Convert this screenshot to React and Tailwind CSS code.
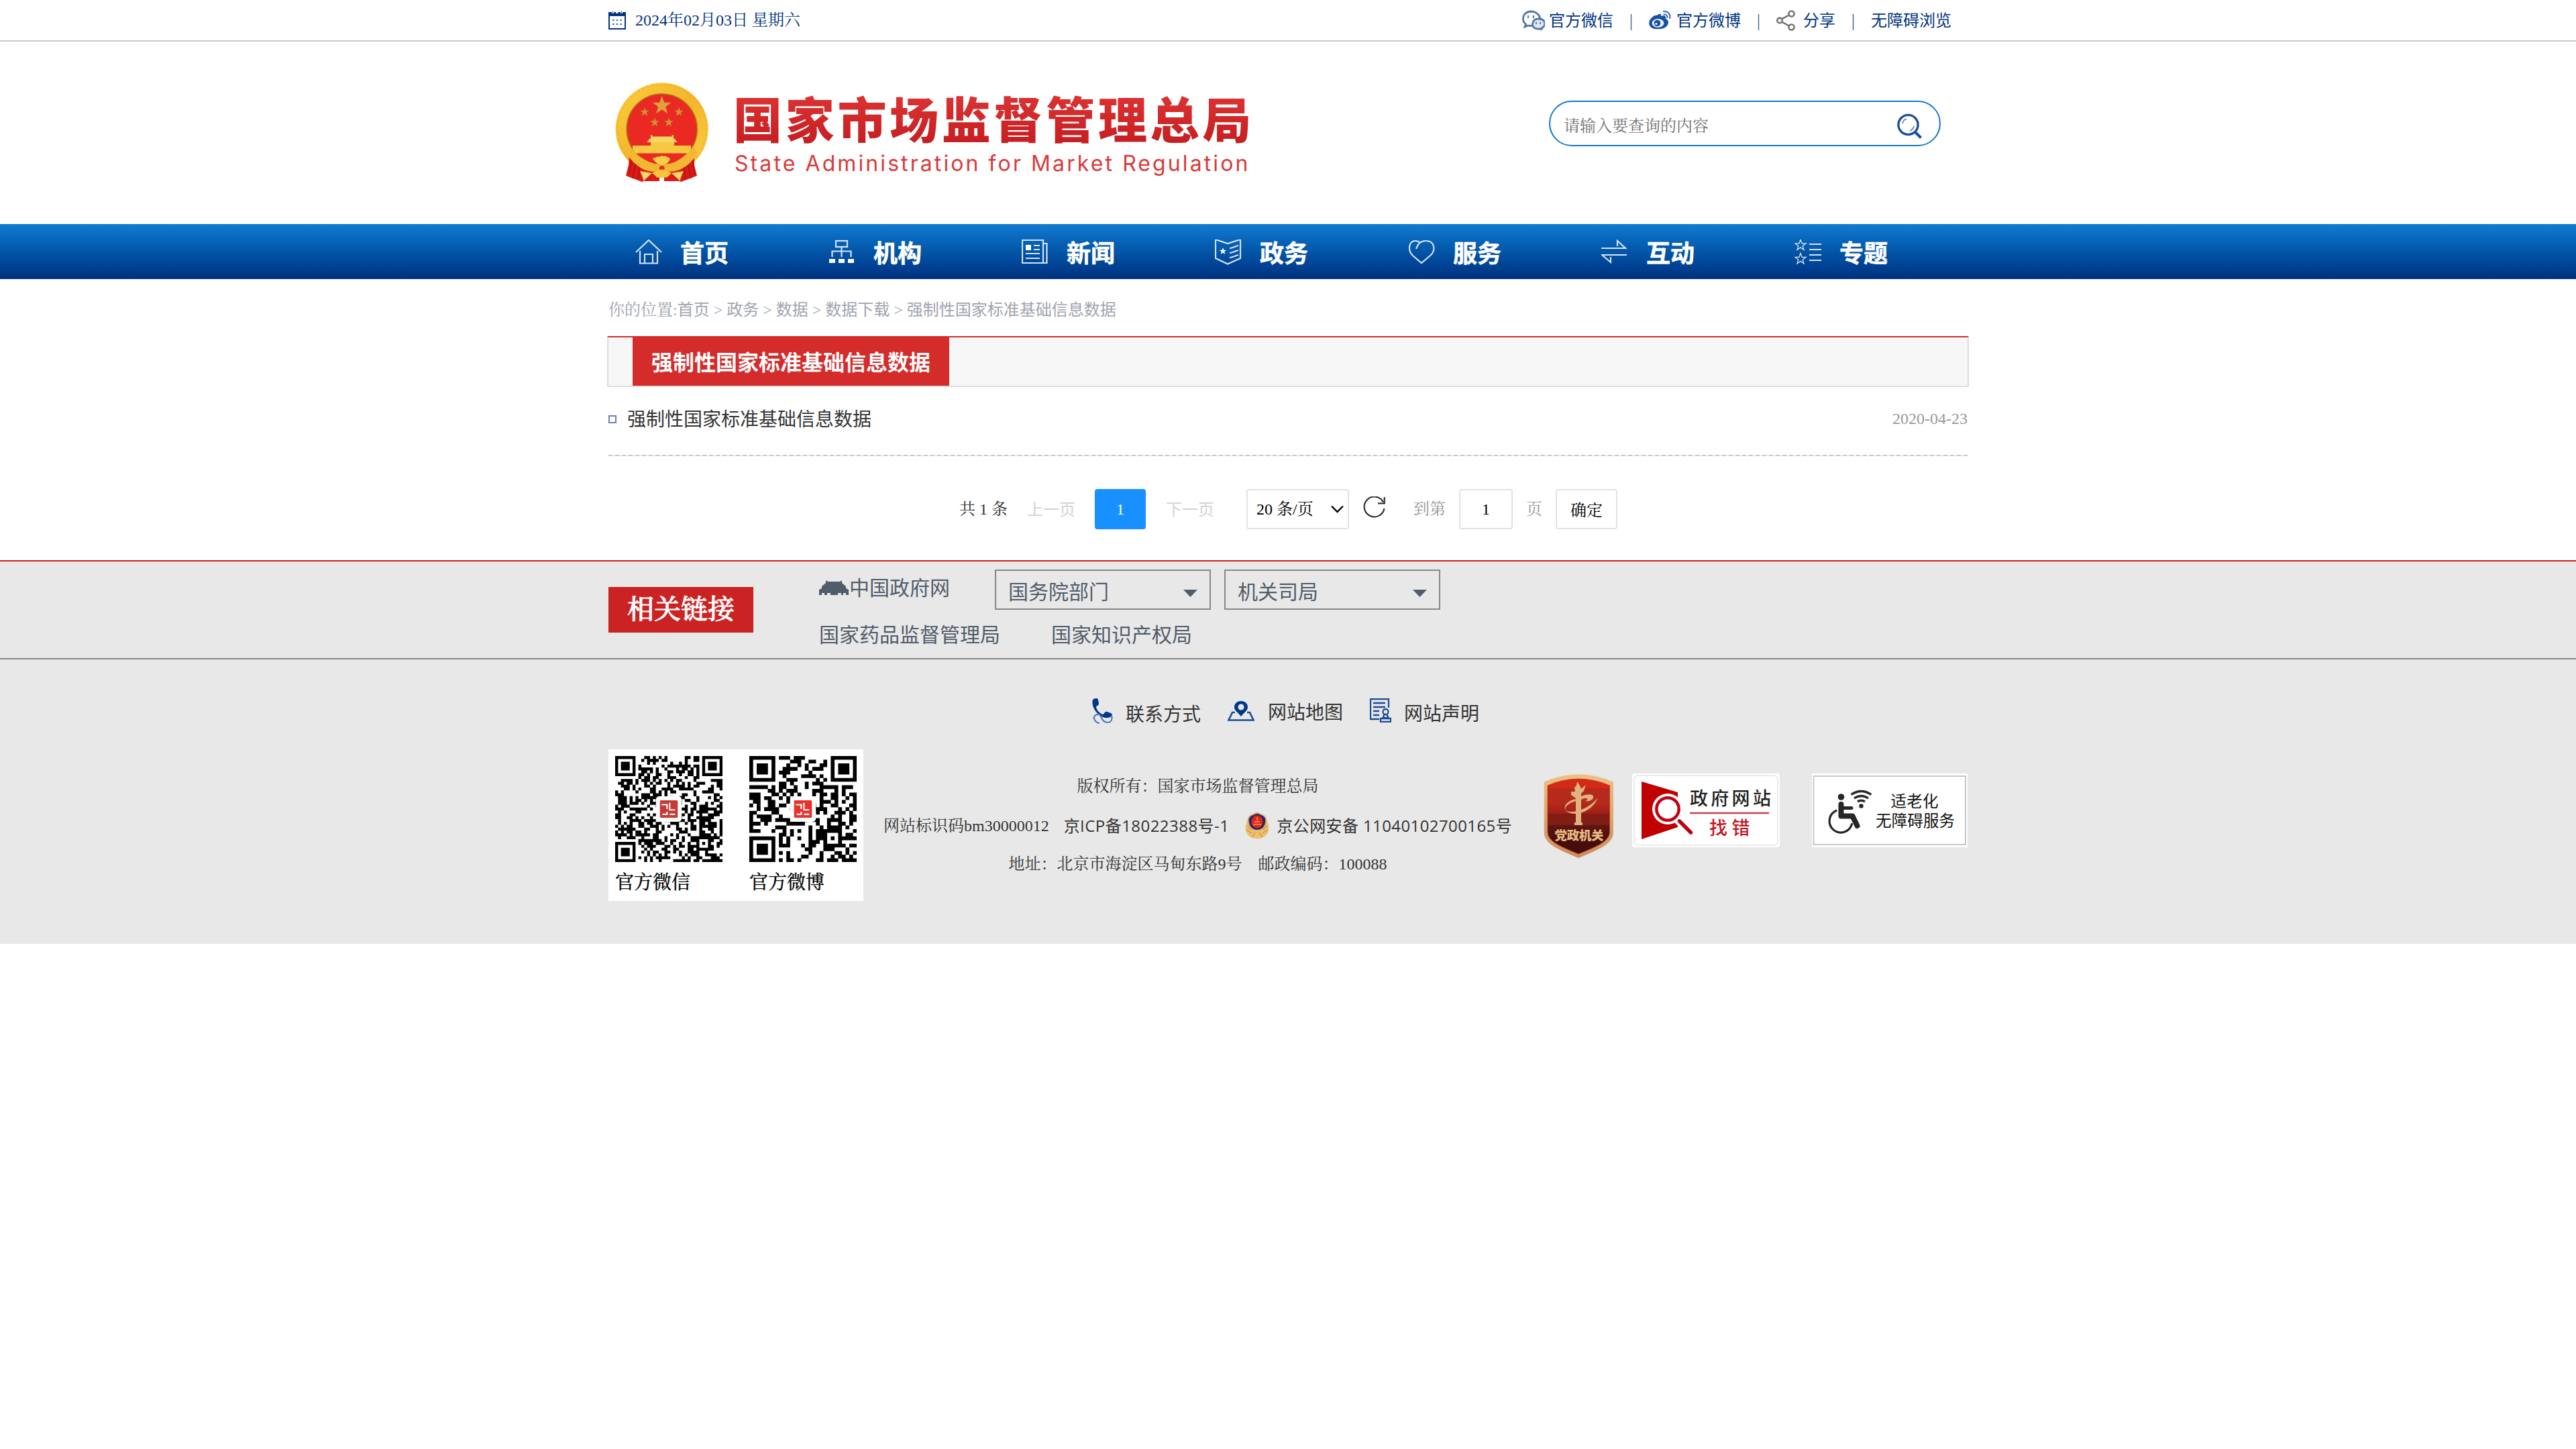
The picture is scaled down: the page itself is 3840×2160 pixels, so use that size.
import React from "react";

const SERIF = "font-['Liberation_Serif','Noto_Serif_CJK_SC','Noto_Sans_CJK_SC',serif]";
const SANS = "font-['Open_Sans','Noto_Sans_CJK_SC',sans-serif]";

function star(cx, cy, r) {
  const pts = [];
  for (let i = 0; i < 10; i++) {
    const a = -Math.PI / 2 + (i * Math.PI) / 5;
    const d = i % 2 ? r * 0.4 : r;
    pts.push(`${(cx + d * Math.cos(a)).toFixed(2)},${(cy + d * Math.sin(a)).toFixed(2)}`);
  }
  return pts.join(" ");
}

function Emblem() {
  return (
    <svg className="h-[170px] w-[170px] shrink-0" viewBox="0 0 170 170">
      <defs>
        <linearGradient id="gold" x1="0" y1="0" x2="1" y2="1">
          <stop offset="0" stopColor="#fbcf3d" />
          <stop offset="0.5" stopColor="#f3b52b" />
          <stop offset="1" stopColor="#fbd045" />
        </linearGradient>
      </defs>
      <circle cx="81.7" cy="82.5" r="69" fill="url(#gold)" />
      <circle cx="81.7" cy="82.5" r="66" fill="none" stroke="#e5a326" strokeWidth="1.5" strokeDasharray="3 4" opacity="0.6" />
      <circle cx="81.7" cy="82.5" r="52.5" fill="#ea2a22" stroke="#a8741a" strokeWidth="1.5" />
      <polygon points={star(81.7, 47.5, 14.5)} fill="#e0a03a" />
      <polygon points={star(56, 57, 7)} fill="#d09038" />
      <polygon points={star(107, 57, 7)} fill="#d09038" />
      <polygon points={star(71, 72.5, 7)} fill="#d09038" />
      <polygon points={star(92, 72.5, 7)} fill="#d09038" />
      <path d="M65 91.5h2.5v2h29v-2H99v5h1.5l4 5.500h-45l4-5.500h1.500z" fill="#fbd564" />
      <path d="M65 102h35v5h25v5l-3 6.500H42l-4-6.500v-5h27z" fill="#f9c842" />
      <path d="M33 119l9 3c8 14 22 20 36 22v16H55l-3 1-24-9 4-16z" fill="#d91a16" />
      <path d="M130 119l-9 3c-8 14-22 20-36 22v16h22l3 1 24-9-4-16z" fill="#d91a16" />
      <path d="M37 126l-4 24M43 132l-5 24M49 138l-3 20M126 126l4 24M120 132l5 24M114 138l3 20" stroke="#b01010" strokeWidth="1.5" />
      <path d="M49 145c3 7 5 10 5 15l13-12M114 145c-3 7-5 10-5 15l-13-12z" fill="#f8d668" />
      <path d="M29 119c12 18 30 30 45 26l8-8 8 8c15 4 33-8 45-26l-6-12c-10 16-25 24-38 24H71c-13 0-28-8-38-24z" fill="#f3b831" />
      <path d="M45 119h73c-9 9-19 16-36 16s-28-7-37-16z" fill="#ea2a22" />
      <path d="M68 127q2-3 5-2 2-3 5-1 3-3 6-1 3-1 5 1 4 0 5 4l-5 6-7 3-7-3z" fill="#f9cd4c" stroke="#d99a22" strokeWidth="0.7" />
      <circle cx="81.700" cy="141" r="4" fill="#ea2a22" />
      <path d="M67 148q15-11 29 0l-5 5q-3 3-6 1-4 3-7 0-4 2-6-2z" fill="#f6c53c" />
    </svg>
  );
}

function CalendarIcon() {
  return (
    <svg className="h-[28px] w-[26px]" viewBox="0 0 26 28">
      <rect x="1" y="3" width="24" height="24" fill="#fff" stroke="#00347f" strokeWidth="2" />
      <rect x="0" y="2" width="26" height="6" fill="#00347f" />
      <path d="M6.500 0v4M12.800 0v4M19.500 0v4" stroke="#fff" strokeWidth="3" />
      <path d="M6.500 0v4M19.500 0v4" stroke="#5b79ad" strokeWidth="1" />
      <path d="M6 14h14M6 20h14" stroke="#3f65a3" strokeWidth="2" strokeDasharray="2.500 3.200" />
    </svg>
  );
}

function WechatIcon() {
  return (
    <svg className="h-[30px] w-[34px]" viewBox="0 0 34 30" fill="none" stroke="#5577a6" strokeWidth="2.800">
      <path d="M16 23c-2 .6-5 .6-7 0l-5 2 1.500-4C-1 16 0 3 13 2c8 0 13 5 14 11" />
      <path d="M24 13c12 0 12 11 5 14v2l-3-1c-8 1-12-4-10-9 1-4 4-6 8-6z" fill="#dfe7f1" />
      <path d="M9 8v4M17 8v4M21 18v3M27 18v3" strokeWidth="2" />
    </svg>
  );
}

function WeiboIcon() {
  return (
    <svg className="h-[28px] w-[33px]" viewBox="0 0 33 28">
      <path d="M12 7c3-3 7-3 6 1 5-2 8 0 7 4 4 2 5 5 3 9-3 6-12 7-19 6C1 26-2 19 2 13c3-4 7-7 10-6z" fill="#1650a0" />
      <ellipse cx="13.500" cy="18.500" rx="9" ry="6.500" fill="#e6edf6" />
      <circle cx="12.500" cy="18.500" r="4.800" fill="#1650a0" />
      <circle cx="11" cy="19.500" r="1.600" fill="#fff" />
      <path d="M21 1c7-1 12 4 10 11M21.500 5.500c4-.6 6.500 2 5.700 5.500" fill="none" stroke="#4a76b3" strokeWidth="2.200" />
    </svg>
  );
}

function ShareIcon() {
  return (
    <svg className="h-[31px] w-[28px]" viewBox="0 0 28 31" fill="none" stroke="#6b6b6b" strokeWidth="2.400">
      <circle cx="5" cy="15.500" r="3.800" />
      <circle cx="22.500" cy="5.500" r="4.100" />
      <circle cx="22.500" cy="25.500" r="4.100" />
      <path d="M8.500 13l10.500-5.500M8.500 18l10.500 5.500" />
    </svg>
  );
}

function SearchIcon() {
  return (
    <svg className="h-[38px] w-[37px]" viewBox="0 0 37 38" fill="none" stroke="#1d4f9c" strokeWidth="3.400">
      <circle cx="16.500" cy="17" r="14.600" />
      <path d="M27.500 28.500l8 8" strokeWidth="4" />
      <path d="M8 15c1-4 3-6 6-7M25 19c-1 4-3 6-6 7" strokeWidth="1.800" stroke="#5f86bd" />
    </svg>
  );
}

const NAV_ICONS = {
  home: (
    <path d="M1 19L20 1l19 18M7 17v18.500h26V17M14 35V22h12v13" />
  ),
  org: (
    <>
      <rect x="11" y="2" width="17" height="9" />
      <path d="M19.500 11v15M5.500 26v-8.500h28V26" />
      <path d="M1 29h9v6H1zM15 29h9v6h-9zM29 29h9v6h-9z" fill="#fff" stroke="none" />
    </>
  ),
  news: (
    <>
      <path d="M1 1h31v34H1zM32 6h5.500v29H32" />
      <path d="M6 8h8v8H6z" fill="#fff" stroke="none" />
      <path d="M18 9h9M18 15h9M6 21h21M6 28h21" />
    </>
  ),
  gov: (
    <>
      <path d="M1 0l18 6 19-6v28L19 36.500 1 28z" />
      <polygon points={star(12, 17.500, 5.500)} fill="#fff" stroke="none" />
      <path d="M22 13c5 0 8-3 13-4M22 20c5 0 8-3 13-4M22 27c5 0 8-3 13-4" />
    </>
  ),
  heart: <path d="M12 14C14 8 18 2 26 2c15 0 15 15 7 22L20 35 7 24C-1 16 1 2 11 2c3 0 5 1 7 3" />,
  swap: <path d="M0 13h36L24 2v8M38 23H1l13 11v-8" />,
  topic: (
    <>
      <polygon points={star(9, 8.500, 8.500)} strokeWidth="1.300" />
      <polygon points={star(9, 29, 8.500)} strokeWidth="1.300" />
      <path d="M22 7h18M22 15h18M22 23h18M22 31h18" />
    </>
  ),
};

const NAV = [
  ["home", "首页"],
  ["org", "机构"],
  ["news", "新闻"],
  ["gov", "政务"],
  ["heart", "服务"],
  ["swap", "互动"],
  ["topic", "专题"],
];

function qrPath(n, seed) {
  let s = seed;
  const rnd = () => {
    s = (s * 1103515245 + 12345) % 2147483648;
    return s / 2147483648;
  };
  const finder = (x, y) => {
    const spots = [[0, 0], [n - 7, 0], [0, n - 7]];
    for (const [fx, fy] of spots) {
      const dx = x - fx;
      const dy = y - fy;
      if (dx >= -1 && dx <= 7 && dy >= -1 && dy <= 7) {
        const m = Math.max(Math.abs(dx - 3), Math.abs(dy - 3));
        return m === 3 || m <= 1 ? 1 : 0;
      }
    }
    const a = Math.max(Math.abs(x - (n - 7)), Math.abs(y - (n - 7)));
    if (a <= 2) return a === 1 ? 0 : 1;
    return -1;
  };
  let d = "";
  for (let y = 0; y < n; y++) {
    for (let x = 0; x < n; x++) {
      const r = rnd();
      const f = finder(x, y);
      if (f === 1 || (f === -1 && r > 0.49)) d += `M${x} ${y}h1.03v1.03h-1.03z`;
    }
  }
  return d;
}

function QrCode({ n, seed, tone }) {
  const c = n / 2;
  const w = n * 0.12;
  const r = n * 0.083;
  return (
    <svg className="h-[158px] w-[160px]" viewBox={`0 0 ${n} ${n}`} preserveAspectRatio="none">
      <path d={qrPath(n, seed)} fill="#000" />
      <rect x={c - w} y={c - w} width={w * 2} height={w * 2} rx={n * 0.03} fill="#fff" />
      <rect x={c - r} y={c - r} width={r * 2} height={r * 2} rx={n * 0.01} fill={tone} />
      <path
        d={`M${c - r * 0.8} ${c - r * 0.5}h${r * 0.6}v${r * 0.5}M${c + r * 0.1} ${c - r * 0.7}v${r * 0.8}h${r * 0.6}M${c - r * 0.7} ${c + r * 0.6}h${r * 0.5}v${-r * 0.3}M${c + r * 0.1} ${c + r * 0.6}h${r * 0.6}`}
        stroke="#fff"
        strokeWidth={n * 0.013}
        fill="none"
      />
    </svg>
  );
}

function PartyShield() {
  return (
    <svg className="h-[127px] w-[105px] shrink-0" viewBox="0 0 105 127">
      <defs>
        <linearGradient id="rim" x1="0" y1="0" x2="0" y2="1">
          <stop offset="0" stopColor="#ecc184" />
          <stop offset="1" stopColor="#c98f5c" />
        </linearGradient>
        <linearGradient id="field" x1="0" y1="0" x2="0" y2="1">
          <stop offset="0" stopColor="#d22a17" />
          <stop offset="0.12" stopColor="#d22a17" />
          <stop offset="0.13" stopColor="#b52a1c" />
          <stop offset="0.32" stopColor="#b52a1c" />
          <stop offset="0.46" stopColor="#a01f17" />
          <stop offset="0.47" stopColor="#811d14" />
          <stop offset="0.61" stopColor="#811d14" />
          <stop offset="0.62" stopColor="#5f1712" />
          <stop offset="0.84" stopColor="#450d0b" />
          <stop offset="1" stopColor="#450d0b" />
        </linearGradient>
      </defs>
      <path d="M.7 12.500Q52-10 104 12.500V88c0 18-26 27-52 38C26 115 .7 106 .7 88z" fill="url(#rim)" />
      <path d="M6 18Q52-2 98.500 18V87c0 15-22 23-46.500 33C28 110 6 102 6 87z" fill="url(#field)" stroke="#c9301c" strokeWidth="0.8" />
      <path d="M46 77v-4h2V37l-7-5v-5h6l-1-6 3-3 1-6 4 6 2 5 7-6-3 9-4 4v43h2v4z" fill="#e0b27e" />
      <path d="M54 35c12-6 22-4 20 1-1 4-7 6-12 5 4-1 5-4 0-4-3 0-6 2-8 3z" fill="#e0b27e" />
      <path d="M48 41c-14 4-19 12-13 15 9 4 33-3 46-20-8 20-31 28-44 22-11-5-4-17 11-20z" fill="#e0b27e" />
      <text x="53" y="98.500" textAnchor="middle" fontSize="18.500" fontWeight="900" fill="#e6b982" textLength="73" fontFamily="'Noto Sans CJK SC', sans-serif">党政机关</text>
    </svg>
  );
}

function ErrorReportCard() {
  return (
    <svg className="h-[110px] w-[220px] shrink-0" viewBox="0 0 220 110">
      <rect width="220" height="110" rx="4" fill="#fff" />
      <rect x="3" y="3" width="214" height="104" rx="6" fill="none" stroke="#ececec" strokeWidth="2" />
      <path d="M14 12l54 16v52L14 98z" fill="#c00000" />
      <circle cx="53" cy="53" r="23" fill="#fff" />
      <path d="M66 68l10 10" stroke="#fff" strokeWidth="11" />
      <circle cx="53" cy="53" r="16.700" fill="#fff" stroke="#c00010" strokeWidth="4.500" />
      <path d="M70.500 71L87.500 88" stroke="#c00010" strokeWidth="5.500" strokeLinecap="round" />
      <text x="86" y="47" fontSize="27" letterSpacing="4.300" fontWeight="500" fill="#222" fontFamily="'Noto Sans CJK SC', sans-serif">政府网站</text>
      <path d="M86 59h118" stroke="#d0404a" strokeWidth="2.300" />
      <text x="115" y="91" fontSize="27" letterSpacing="6.500" fontWeight="500" fill="#c8141e" fontFamily="'Noto Sans CJK SC', sans-serif">找错</text>
    </svg>
  );
}

function AccessibleCard() {
  return (
    <svg className="h-[110px] w-[232px] shrink-0" viewBox="0 0 232 110">
      <rect width="232" height="110" fill="#fff" />
      <rect x="2.500" y="4" width="226.500" height="102" fill="none" stroke="#c8c8c8" strokeWidth="2" />
      <g fill="none" stroke="#262626">
        <circle cx="43.500" cy="35" r="4.800" fill="#262626" stroke="none" />
        <path d="M43.500 46v17.500h17L67.500 78" strokeWidth="8" strokeLinecap="round" strokeLinejoin="round" />
        <path d="M44 51.500h15" strokeWidth="5" strokeLinecap="round" />
        <path d="M36 55.500a17 17 0 1 0 23.500 20" strokeWidth="3.200" strokeLinecap="round" />
        <circle cx="73.500" cy="48.500" r="3.200" fill="#262626" stroke="none" />
        <path d="M58.500 31.500q15-10 30 0M63 37q10.500-7 21 0M68 42q5.500-3.500 11 0" strokeWidth="3.300" />
      </g>
      <text x="117.500" y="49.500" fontSize="23.500" fill="#111" textLength="71" fontFamily="'Noto Sans CJK SC', sans-serif">适老化</text>
      <text x="95" y="79" fontSize="23.500" fill="#111" textLength="118" fontFamily="'Noto Sans CJK SC', sans-serif">无障碍服务</text>
    </svg>
  );
}

function PoliceBadge() {
  return (
    <svg className="h-[40px] w-[36px] shrink-0" viewBox="0 0 36 40">
      <path d="M6 10C-3 18 0 34 9 37c5 3 13 3 18 0 9-3 12-19 3-27z" fill="#ecc070" />
      <path d="M3 20l6 6M2 26l8 5M33 20l-6 6M34 26l-8 5M10 37l5-7M26 37l-5-7" stroke="#d99c48" strokeWidth="1.500" />
      <path d="M18 0c3 0 4 2 8 3 6 2 7 8 6 12-1 8-6 12-14 12S5 23 4 15C3 11 4 5 10 3c4-1 5-3 8-3z" fill="#e2a95a" />
      <path d="M18 2c3 0 5 2 8 3 4 2 5 6 4 10-1 7-6 11-12 11S7 22 6 15C5 11 6 7 10 5c3-1 5-3 8-3z" fill="#28286e" />
      <ellipse cx="18" cy="14" rx="8.500" ry="9.500" fill="#e0261f" />
      <path d="M12 18h12M14 14h8M18 7v5" stroke="#f0a030" strokeWidth="1.500" />
    </svg>
  );
}

function PhoneIcon() {
  return (
    <svg className="h-[38px] w-[31px]" viewBox="0 0 31 38">
      <path d="M1 2c2-2 7-3 8 0l1 6c0 3-4 3-4 5 1 5 5 9 10 11 2 0 3-5 6-4l6 2c3 2 2 5-1 6-13 6-30-13-26-26z" fill="#00388a" />
      <path d="M2 30c3-8 9-8 12-1 3 8 13 9 15 3 1-3 1-5-1-6M3 29c0 5 5 8 8 8" fill="none" stroke="#5a7db5" strokeWidth="2.200" />
    </svg>
  );
}

function MapIcon() {
  return (
    <svg className="h-[30px] w-[40px]" viewBox="0 0 40 30">
      <path d="M11 17H7L1.500 28.500h37L33 17h-4" fill="none" stroke="#1d4c96" strokeWidth="2.600" />
      <path d="M20 0c6 0 10 4 10 9 0 6-6 8-10 14C16 17 10 15 10 9c0-5 4-9 10-9z" fill="#00388a" />
      <circle cx="20" cy="9" r="4.500" fill="#e8e8e8" />
    </svg>
  );
}

function NoticeIcon() {
  return (
    <svg className="h-[36px] w-[32px]" viewBox="0 0 32 36" fill="none" stroke="#1d4c96" strokeWidth="2.300">
      <path d="M14 31H1V1h27v13" />
      <path d="M5 7h18M5 13h18M5 19h9M5 25h9" />
      <circle cx="23.500" cy="20" r="4" />
      <path d="M21.500 24l-2 5h8l-2-5M16 30h15v5H16z" />
    </svg>
  );
}

function GateIcon() {
  return (
    <svg className="h-[22px] w-[44px]" viewBox="0 0 44 22" fill="#515c69">
      <path d="M10 0l3 2h18l3-2v4l6 5v3l4 2v8h-4v-3h-4v3h-3v-3h-5v3H17v-3h-5v3H8v-3H4v3H0v-8l4-2V9l6-5z" />
    </svg>
  );
}

function Caret() {
  return (
    <svg className="h-[11px] w-[21px]" viewBox="0 0 21 11" fill="#515c69">
      <path d="M0 0h21L10.500 11z" />
    </svg>
  );
}

function LinkSelect({ label }) {
  return (
    <div className="flex h-[60px] w-[322px] shrink-0 items-center justify-between border-2 border-[#888] pr-[18px] pl-[18px] text-[30px] leading-[60px]">
      <span className="pt-[6px] leading-[50px]">{label}</span>
      <span className="pt-[10px]"><Caret /></span>
    </div>
  );
}

export default function App() {
  const sep = <span className="w-[13px] text-center font-light">|</span>;
  return (
    <div className={`min-h-[2160px] w-[3840px] bg-white whitespace-nowrap text-[#333] ${SERIF}`}>
      {/* Top bar */}
      <div className="h-[62px] border-b-2 border-[#ccc]">
        <div className="mx-auto flex h-[60px] w-[2026px] items-center pr-6 text-[24px] leading-[30px] text-[#00347f]">
          <CalendarIcon />
          <span className="ml-[14px]">2024年02月03日 星期六</span>
          <div className={`ml-auto flex items-center ${SANS}`}>
            <WechatIcon />
            <span className="mr-5 ml-[6px]">官方微信</span>
            {sep}
            <span className="ml-5"><WeiboIcon /></span>
            <span className="mr-5 ml-2">官方微博</span>
            {sep}
            <span className="ml-5"><ShareIcon /></span>
            <span className="mr-5 ml-3">分享</span>
            {sep}
            <span className="ml-5">无障碍浏览</span>
          </div>
        </div>
      </div>

      {/* Logo and search */}
      <header className="mx-auto flex h-[272px] w-[2026px] items-start">
        <div className="mt-[48px] -ml-[2px]"><Emblem /></div>
        <div className="mt-[67px] ml-[18px] font-['Noto_Sans_CJK_SC',sans-serif]">
          <div className="bg-linear-to-b from-[#e03535] to-[#c41c20] bg-clip-text text-[73px] leading-[90px] font-black tracking-[4.700px] text-transparent">国家市场监督管理总局</div>
          <div className="mt-[5px] ml-[2px] font-['Inter',sans-serif] text-[32px] leading-[40px] tracking-[3.090px] text-[#d93a3a]">State Administration for Market Regulation</div>
        </div>
        <div className="mt-[88px] mr-[40px] ml-auto flex h-[68px] w-[584px] items-center rounded-[34px] border-2 border-[#1478cc] pt-[8px] pl-[20px]">
          <span className="text-[24px] leading-[30px] text-[#757575]">请输入要查询的内容</span>
          <span className="mr-[26px] ml-auto"><SearchIcon /></span>
        </div>
      </header>

      {/* Main navigation */}
      <nav className="h-[82px] bg-linear-to-b from-[#127bd0] to-[#003080]">
        <div className={`mx-auto flex h-[82px] w-[2026px] items-center pl-10 text-white ${SANS}`}>
          {NAV.map(([icon, label]) => (
            <a key={icon} className="flex w-[288px] shrink-0 items-center">
              <svg className="mt-[2px] h-[38px] w-[41px]" viewBox="0 0 41 38" fill="none" stroke="#d5e2f3" strokeWidth="2.200">
                {NAV_ICONS[icon]}
              </svg>
              <span className="mt-[5px] ml-[26px] text-[36px] leading-[50px] font-bold [-webkit-text-stroke:0.600px_white]">{label}</span>
            </a>
          ))}
        </div>
      </nav>

      <main className="mx-auto w-[2030px]">
        {/* Breadcrumb */}
        <div className="flex h-[85px] items-center pt-[5px] pl-[2px] text-[24px] leading-[30px] text-[#a0a4b0]">
          <p>
            你的位置:<a className={SANS}>首页</a> &gt; <a className={SANS}>政务</a> &gt; <a className={SANS}>数据</a> &gt;{" "}
            <a className={SANS}>数据下载</a> &gt; <a className={SANS}>强制性国家标准基础信息数据</a>
          </p>
        </div>

        {/* Section title */}
        <div className="h-[76px] border-2 border-[#ddd] border-t-[#d42b2b] bg-[#f7f7f7] pl-[36px]">
          <h2 className={`flex h-[72px] w-[472px] items-center justify-center bg-[#d42b2b] pt-[2px] text-[32px] leading-[40px] font-bold text-white ${SANS}`}>
            强制性国家标准基础信息数据
          </h2>
        </div>

        {/* Result list */}
        <div className="mx-[2px] flex h-[101px] items-center pb-[7px]">
          <span className="mt-[2px] h-3 w-3 border-2 border-[#6b80b5] bg-white" />
          <a className={`ml-4 text-[28px] leading-[40px] ${SANS}`}>强制性国家标准基础信息数据</a>
          <span className="ml-auto text-[24px] leading-[30px] text-[#999]">2020-04-23</span>
        </div>
        <div className="mx-[2px] h-[2px] bg-[repeating-linear-gradient(90deg,#c6cad3_0_6px,#eceef2_6px_10px)]" />

        {/* Pagination */}
        <div className="flex h-[155px] items-start pt-[49px] pl-[525px] text-[24px] leading-[60px]">
          <span className="w-[72px]">共 1 条</span>
          <span className={`ml-[29px] text-[#d2d2d2] ${SANS}`}>上一页</span>
          <span className="ml-[29px] h-[60px] w-[76px] rounded-[4px] bg-[#1890ff] text-center text-white">1</span>
          <span className={`ml-[30px] text-[#d2d2d2] ${SANS}`}>下一页</span>
          <span className="ml-[48px] flex h-[60px] w-[153px] items-center rounded-[4px] border-2 border-[#e2e2e2] pl-[13px] text-black">
            20 条/页
            <svg className="mr-[6px] ml-auto h-[12px] w-[19px]" viewBox="0 0 19 12" fill="none" stroke="#000" strokeWidth="2.400">
              <path d="M1 1.500l8.500 8.500L18 1.500" />
            </svg>
          </span>
          <svg className="mt-[11px] ml-[21px] h-[33px] w-[34px]" viewBox="0 0 34 33" fill="none" stroke="#333" strokeWidth="2.200">
            <path d="M30 8.500A15 15 0 1 0 31.500 18M31.800 1v9.300H22" />
          </svg>
          <span className="ml-[41px] text-[#999]">到第</span>
          <span className="ml-[20px] h-[60px] w-[80px] rounded-[4px] border-2 border-[#e2e2e2] text-center leading-[56px] text-black">1</span>
          <span className="ml-[20px] text-[#999]">页</span>
          <span className="ml-[20px] h-[60px] w-[92px] rounded-[4px] border-2 border-[#e2e2e2] text-center leading-[60px] text-black">确定</span>
        </div>
      </main>

      {/* Related links */}
      <section className="h-[148px] border-t-2 border-b-2 border-t-[#c22] border-b-[#888] bg-[#e8e8e8]">
        <div className="mx-auto flex w-[2026px] items-start">
          <h3 className="mt-[38px] flex h-[68px] w-[216px] items-center justify-center bg-[#cb2323] text-[40px] leading-[50px] font-medium text-white [-webkit-text-stroke:0.800px_white]">相关链接</h3>
          <div className={`ml-[98px] text-[30px] leading-[40px] text-[#515c69] ${SANS}`}>
            <div className="flex h-[84px] items-start pt-[12px]">
              <a className="flex h-[54px] w-[262px] items-center">
                <GateIcon />
                <span className="ml-px">中国政府网</span>
              </a>
              <LinkSelect label="国务院部门" />
              <span className="w-5" />
              <LinkSelect label="机关司局" />
            </div>
            <div className="flex h-[50px] items-center">
              <a className="w-[346px]">国家药品监督管理局</a>
              <a>国家知识产权局</a>
            </div>
          </div>
        </div>
      </section>

      {/* Footer */}
      <footer className="h-[424px] bg-[#e8e8e8]">
        <div className={`mx-auto flex h-[134px] w-[2026px] items-start pt-[56px] pl-[721px] text-[28px] leading-[40px] ${SANS}`}>
          <span className="mt-[2px]"><PhoneIcon /></span>
          <a className="mt-[5px] ml-[19px] w-[112px]">联系方式</a>
          <span className="mt-[6px] ml-[40px]"><MapIcon /></span>
          <a className="mt-[2px] ml-[20px] w-[112px]">网站地图</a>
          <span className="mt-[2px] ml-[40px]"><NoticeIcon /></span>
          <a className="mt-[4px] ml-[19px]">网站声明</a>
        </div>
        <div className="mx-auto flex w-[2026px] items-start">
          <div className="flex h-[226px] w-[380px] shrink-0 gap-10 bg-white pt-[10px] pl-[10px] text-[28px] leading-[40px] text-black">
            <div>
              <QrCode n={37} seed={2024} tone="#c63a36" />
              <div className="mt-[11px] [-webkit-text-stroke:0.400px_black]">官方微信</div>
            </div>
            <div>
              <QrCode n={29} seed={77} tone="#e8312b" />
              <div className="mt-[11px] [-webkit-text-stroke:0.400px_black]">官方微博</div>
            </div>
          </div>
          <div className="ml-[30px] flex w-[937px] shrink-0 flex-col items-center pt-[40px] text-[24px] leading-[30px]">
            <p>版权所有：国家市场监督管理总局</p>
            <div className="mt-[21px] flex h-[46px] w-[937px] items-center">
              <span>网站标识码bm30000012</span>
              <a className={`ml-[22px] w-[248px] tracking-[0.450px] ${SANS}`}>京ICP备18022388号-1</a>
              <span className="ml-[24px]"><PoliceBadge /></span>
              <a className={`ml-[11px] tracking-[0.400px] ${SANS}`}>京公网安备 11040102700165号</a>
            </div>
            <p className="mt-[19px]">地址：北京市海淀区马甸东路9号　邮政编码：100088</p>
          </div>
          <div className="ml-[47px] flex items-start pt-[36px]">
            <PartyShield />
            <span className="w-[27px]" />
            <ErrorReportCard />
            <span className="w-[48px]" />
            <AccessibleCard />
          </div>
        </div>
      </footer>
    </div>
  );
}
